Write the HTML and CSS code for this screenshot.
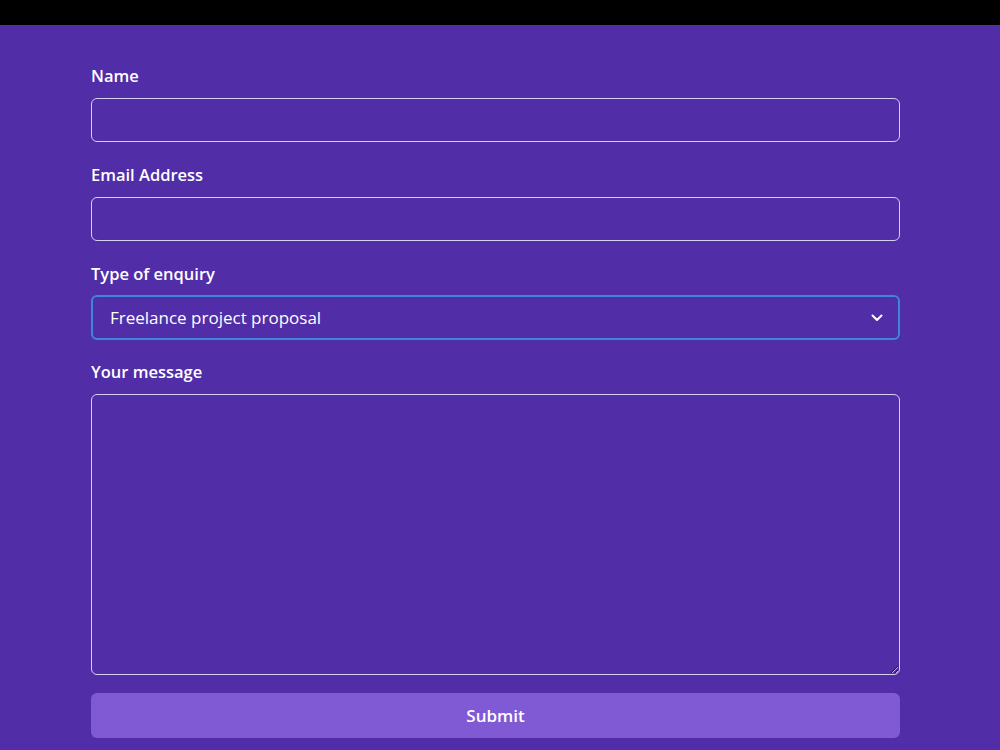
FILE: index.html
```html
<!DOCTYPE html>
<html lang="en">
<head>
<meta charset="UTF-8" />
<title>Contact</title>
<link rel="stylesheet" href="styles.css">
</head>
<body>

<div class="topbar"></div>

<main>
  <form class="contact-form">
    <div class="field">
      <label for="name">Name</label>
      <input type="text" id="name" />
    </div>

    <div class="field">
      <label for="email">Email Address</label>
      <input type="email" id="email" />
    </div>

    <div class="field field-select">
      <label for="enquiry">Type of enquiry</label>
      <div class="select-wrap">
        <select id="enquiry">
          <option>Freelance project proposal</option>
          <option>General question</option>
          <option>Other</option>
        </select>
        <svg class="chevron" width="12" height="8" viewBox="0 0 12 8">
          <path d="M1.5 1.5 L6 6 L10.5 1.5" fill="none" stroke="#fff" stroke-width="2" stroke-linecap="round" stroke-linejoin="round"/>
        </svg>
      </div>
    </div>

    <div class="field">
      <label for="message">Your message</label>
      <textarea id="message"></textarea>
    </div>

    <button type="submit">Submit</button>
  </form>
</main>

</body>
</html>
```

FILE: styles.css
```css
body {
  font-family: 'Open Sans', 'Noto Sans', sans-serif;
  background: #512da8;
  color: #fff;
  margin: 0; padding: 0;
}
.topbar {
  height: 25px;
  background: #000;
}
main {
  padding: 39px 100px 0 91px;
}
.field {
  margin-bottom: 21px;
}
.field-select {
  margin-bottom: 20px;
}
label {
  display: block;
  font-size: 16.5px;
  line-height: 24px;
  font-weight: 600;
  margin-bottom: 10px;
}
input, select, textarea {
  display: block;
  box-sizing: border-box;
  width: 100%;
  background: transparent;
  color: #fff;
  font-family: inherit;
  font-size: 17px;
  border: 1px solid #d6cdf0;
  border-radius: 6px;
  outline: none;
}
input {
  height: 44px;
  padding: 0 18px;
}
.select-wrap {
  position: relative;
  margin-top: -1px;
}
select {
  height: 45px;
  padding: 0 17px;
  border: 2px solid #3d86dc;
  appearance: none;
  -webkit-appearance: none;
}
select option {
  color: #000;
}
.chevron {
  position: absolute;
  right: 17px;
  top: 19px;
  pointer-events: none;
}
textarea {
  height: 281px;
  padding: 10px 18px;
  margin-bottom: -3px;
}
button {
  display: block;
  width: 100%;
  height: 45px;
  background: #8059d4;
  color: #fff;
  font-family: inherit;
  font-size: 17px;
  font-weight: 600;
  border: none;
  border-radius: 6px;
  cursor: pointer;
}
```
